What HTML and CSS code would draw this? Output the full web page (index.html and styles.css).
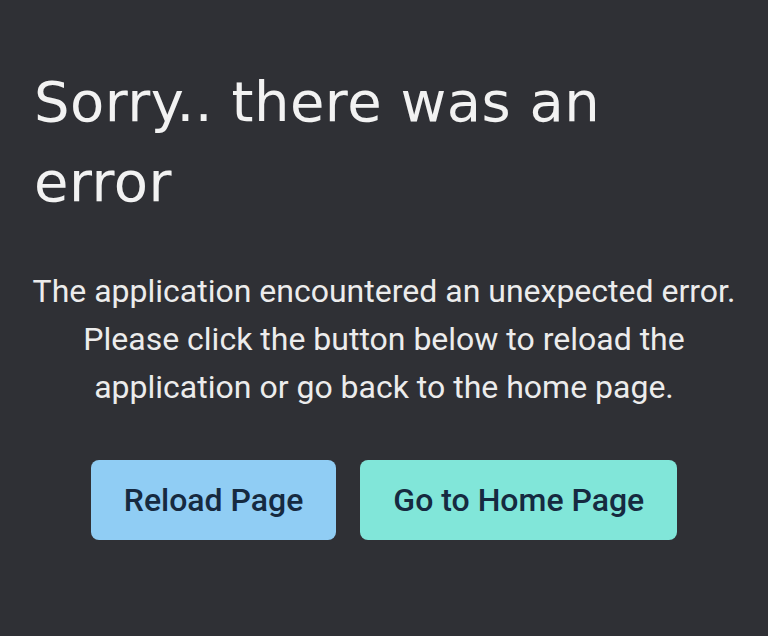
FILE: index.html
```html
<!DOCTYPE html>
<html lang="en">
<head>
    <meta charset="UTF-8">
    <meta name="viewport" content="width=device-width, initial-scale=1.0">
    <title>Error</title>
    <link rel="stylesheet" href="styles.css">
</head>
<body>
    <div class="error-page">
        <h1 class="error-title">Sorry.. there was an error</h1>
        <p class="error-text">The application encountered an unexpected error. Please click the button below to reload the application or go back to the home page.</p>
        <div class="actions">
            <button class="btn btn-blue">Reload Page</button>
            <button class="btn btn-teal">Go to Home Page</button>
        </div>
    </div>
</body>
</html>
```

FILE: styles.css
```css
html, body {
    margin: 0;
    height: 100%;
}
body {
    background: #2f3035;
    color: #ececec;
    font-family: Roboto, 'Liberation Sans', sans-serif;
}
.error-page {
    padding: 62px 34px 0;
}
.error-title {
    margin: 0 0 45px;
    font-family: 'DejaVu Sans', sans-serif;
    font-weight: normal;
    font-size: 56px;
    line-height: 80px;
    letter-spacing: 0.5px;
    color: #f2f2f2;
    max-width: 620px;
}
.error-text {
    margin: 0 -20px 49px;
    text-align: center;
    font-size: 32px;
    line-height: 48px;
}
.actions {
    display: flex;
    justify-content: center;
    gap: 24px;
}
.btn {
    height: 80px;
    padding: 0 33px;
    border: none;
    border-radius: 8px;
    font-family: Roboto, 'Liberation Sans', sans-serif;
    font-size: 32px;
    font-weight: 500;
    color: #162a40;
    cursor: pointer;
}
.btn-blue {
    background: #90cdf4;
}
.btn-teal {
    background: #81e6d9;
}
```
